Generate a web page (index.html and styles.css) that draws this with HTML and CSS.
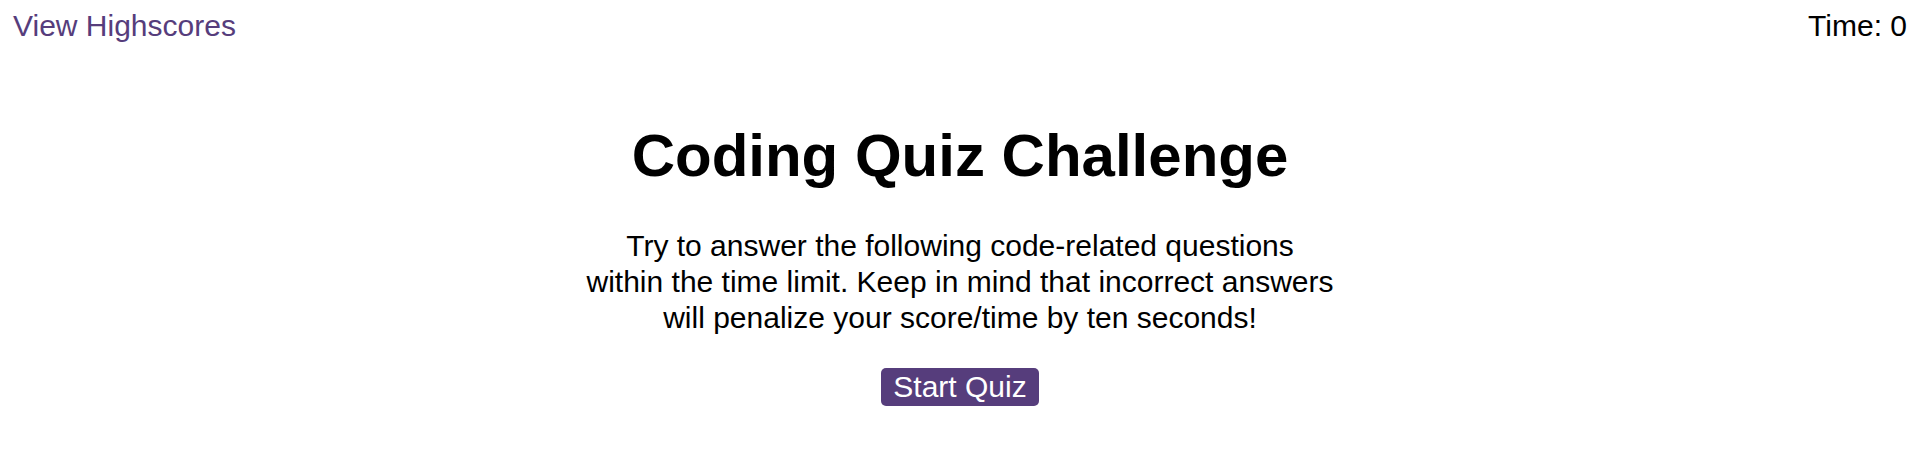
FILE: index.html
```html
<!DOCTYPE html>
<html lang="en">
<head>
<meta charset="utf-8">
<title>Coding Quiz Challenge</title>
<link rel="stylesheet" href="styles.css">
</head>
<body>
  <header class="top-bar">
    <a class="highscores-link" href="#">View Highscores</a>
    <div class="timer">Time: <span class="timer-value">0</span></div>
  </header>
  <main class="intro">
    <h1 class="intro-title">Coding Quiz Challenge</h1>
    <p class="intro-text">Try to answer the following code-related questions within the time limit. Keep in mind that incorrect answers will penalize your score/time by ten seconds!</p>
    <button class="start-button" type="button">Start Quiz</button>
  </main>
</body>
</html>
```

FILE: styles.css
```css
html, body {
  margin: 0;
  padding: 0;
  background: #ffffff;
}

body {
  font-family: "Liberation Sans", Arial, sans-serif;
  color: #000000;
}

.top-bar {
  display: flex;
  justify-content: space-between;
  align-items: flex-start;
  padding: 9px 13px 0 13px;
  font-size: 30px;
  line-height: normal;
}

.highscores-link {
  color: #563d7c;
  text-decoration: none;
}

.timer {
  color: #000000;
}

.intro {
  display: flex;
  flex-direction: column;
  align-items: center;
  text-align: center;
}

.intro-title {
  margin: 78px 0 0 0;
  font-size: 60px;
  font-weight: bold;
  line-height: normal;
}

.intro-text {
  width: 748px;
  margin: 38px 0 0 0;
  font-size: 30px;
  line-height: 36px;
}

.start-button {
  margin-top: 32px;
  padding: 2px 12px;
  border: none;
  border-radius: 5px;
  background: #563d7c;
  color: #ffffff;
  font-family: "Liberation Sans", Arial, sans-serif;
  font-size: 30px;
  line-height: normal;
  cursor: pointer;
}
```
